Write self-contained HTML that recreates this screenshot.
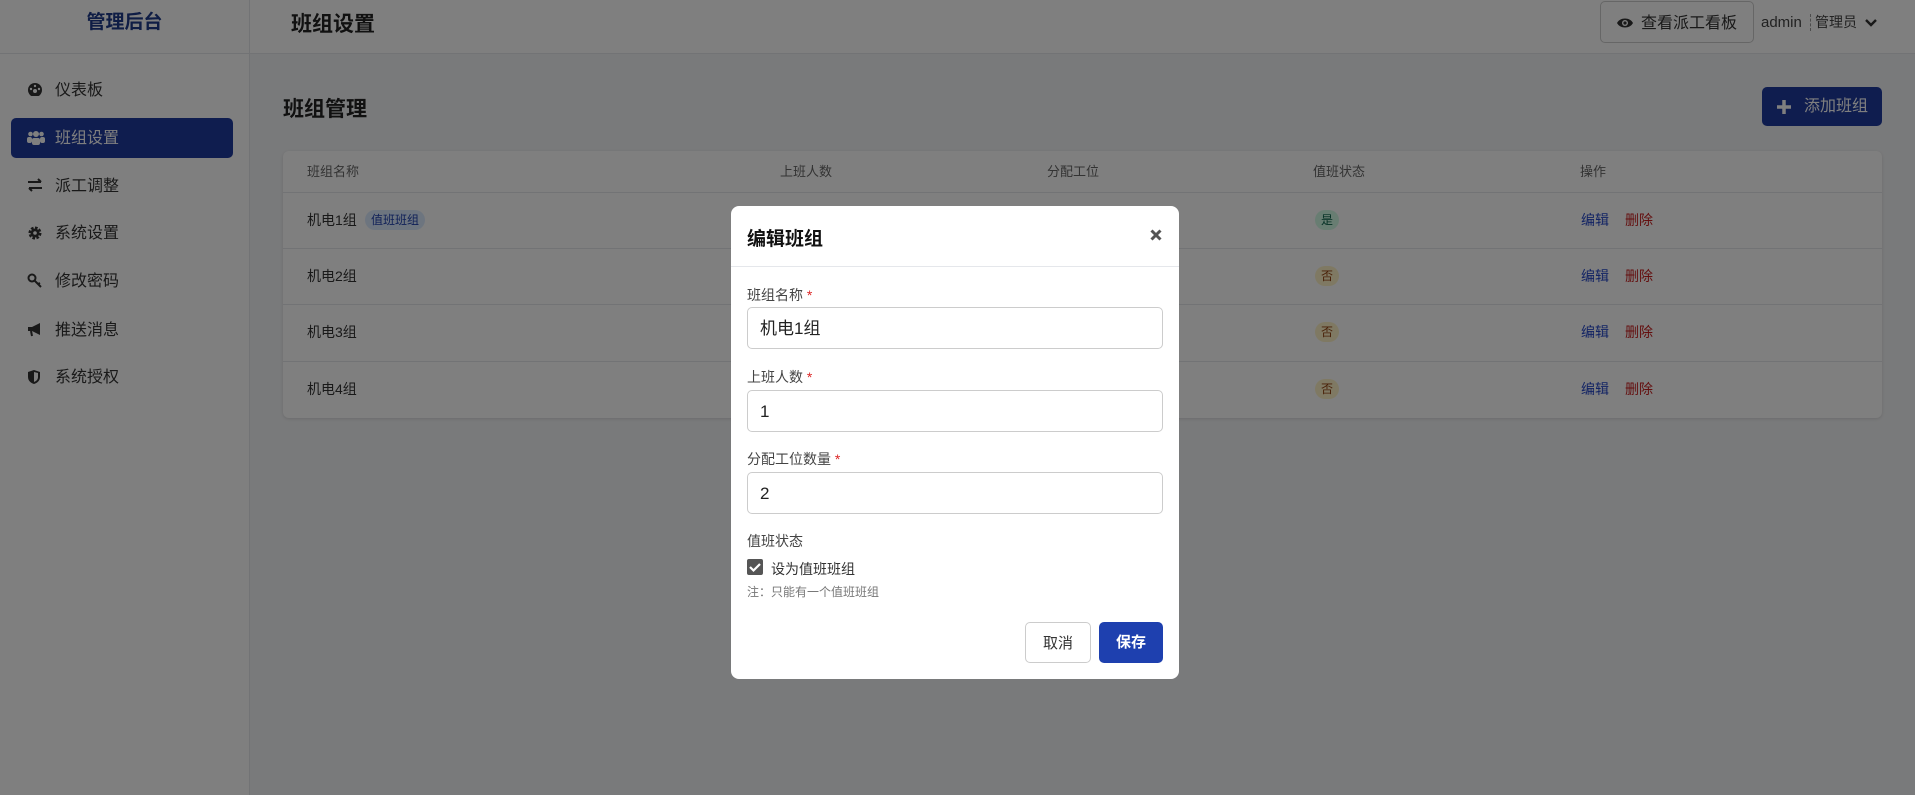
<!DOCTYPE html>
<html><head><meta charset="utf-8">
<style>
*{box-sizing:border-box;margin:0;padding:0}
body{width:1915px;height:795px;overflow:hidden;font-family:"Liberation Sans","Noto Sans CJK SC",sans-serif;background:#f3f4f6;position:relative;color:#333}
.side{position:absolute;left:0;top:0;width:250px;height:795px;background:#fff;border-right:1px solid #e5e7eb}
.logo{height:54px;border-bottom:1px solid #e5e7eb;text-align:center;line-height:46px;font-size:19px;font-weight:bold;color:#1e3a8a}
.nav{position:absolute;left:11px;width:222px;height:40px;line-height:42px;font-size:16px;color:#333;border-radius:5px;padding-left:44px}
.nav svg{position:absolute;left:16px;top:12px}
.nav.on{background:#1e3a9f;color:#fff}
.head{position:absolute;left:250px;top:0;right:0;height:54px;background:#fff;border-bottom:1px solid #e5e7eb}
.title{position:absolute;left:41px;top:8px;font-size:21px;font-weight:bold;color:#222}
.hbtn{position:absolute;left:1350px;top:1px;width:154px;height:42px;border:1px solid #ccc;border-radius:5px;font-size:16px;line-height:44px;padding-left:40px;color:#333}
.hbtn svg{position:absolute;left:16px;top:15px}
.user{position:absolute;left:1511px;top:12px;font-size:15px;color:#444}
.h2{position:absolute;left:283px;top:93px;font-size:21px;font-weight:bold;color:#222}
.add{position:absolute;left:1762px;top:87px;width:120px;height:39px;background:#1e3a9f;border-radius:5px;color:#fff;font-size:16px;line-height:40px;padding-left:42px}
.card{position:absolute;left:283px;top:151px;width:1599px;height:267px;background:#fff;border-radius:6px;box-shadow:0 1px 3px rgba(0,0,0,.12)}
.th{position:absolute;top:0;height:41px;line-height:41px;font-size:13px;color:#666}
.row{position:absolute;left:0;width:1599px;border-top:1px solid #e5e7eb;height:57px}
.row span{position:absolute;top:0;line-height:54px;font-size:14px}
.badge{display:inline-block;line-height:20px!important;height:20px;padding:0 6px;border-radius:10px;font-size:12px!important;top:17px!important}
.ov{position:absolute;left:0;top:0;width:1915px;height:795px;background:rgba(0,0,0,.5)}
.modal{position:absolute;left:731px;top:206px;width:448px;height:473px;background:#fff;border-radius:8px}
.mt{position:absolute;left:16px;top:18px;font-size:19px;font-weight:bold;color:#111}
.close{position:absolute;left:419px;top:22px}
.hr{position:absolute;left:0;top:60px;width:448px;border-top:1px solid #e5e7eb}
.lb{position:absolute;left:16px;font-size:14px;color:#444}
.lb i{color:#dc2626;font-style:normal}
.in{position:absolute;left:16px;width:416px;height:42px;border:1px solid #ccc;border-radius:5px;font-size:17px;line-height:42px;padding-left:12px;color:#222}
.btn{position:absolute;top:416px;height:41px;border-radius:5px;font-size:15px;line-height:41px;text-align:center}
</style></head><body>
<div class="side">
<div class="logo">管理后台</div>
<div class="nav" style="top:70px"><svg width="16" height="14" viewBox="0 0 16 14"><circle cx="8" cy="8" r="7" fill="#333"/><circle cx="8" cy="9" r="2" fill="#fff"/><circle cx="4" cy="7" r="1.2" fill="#fff"/><circle cx="8" cy="4" r="1.2" fill="#fff"/><circle cx="12" cy="7" r="1.2" fill="#fff"/></svg>仪表板</div>
<div class="nav on" style="top:118px"><svg width="18" height="15" viewBox="0 0 18 15"><circle cx="9" cy="4" r="3" fill="#fff"/><circle cx="3.5" cy="4" r="2.3" fill="#fff"/><circle cx="14.5" cy="4" r="2.3" fill="#fff"/><rect x="5" y="8" width="8" height="7" rx="2" fill="#fff"/><rect x="0" y="7" width="5" height="6" rx="2" fill="#fff"/><rect x="13" y="7" width="5" height="6" rx="2" fill="#fff"/></svg>班组设置</div>
<div class="nav" style="top:166px"><svg width="16" height="14" viewBox="0 0 16 14"><path d="M1 4h13M11 1l3 3M15 10H2M5 13l-3-3" stroke="#333" stroke-width="2" fill="none"/></svg>派工调整</div>
<div class="nav" style="top:213px"><svg width="16" height="16" viewBox="0 0 16 16"><circle cx="8" cy="8" r="5" fill="none" stroke="#333" stroke-width="3" stroke-dasharray="2.5 1.4"/><circle cx="8" cy="8" r="4.5" fill="#333"/><circle cx="8" cy="8" r="1.8" fill="#fff"/></svg>系统设置</div>
<div class="nav" style="top:261px"><svg width="16" height="16" viewBox="0 0 16 16"><circle cx="5" cy="5" r="3.5" fill="none" stroke="#333" stroke-width="2"/><path d="M7.5 7.5L14 14M11 11l2-1" stroke="#333" stroke-width="2"/></svg>修改密码</div>
<div class="nav" style="top:310px"><svg width="16" height="15" viewBox="0 0 16 15"><path d="M1 5h4l8-4v12L5 9H1z" fill="#333"/><path d="M4 9l1 5" stroke="#333" stroke-width="2"/></svg>推送消息</div>
<div class="nav" style="top:357px"><svg width="14" height="16" viewBox="0 0 14 16"><path d="M7 1L1 3v5c0 4 3 6 6 7 3-1 6-3 6-7V3z" fill="#333"/><path d="M7 3v10c2-1 4-2 4-5V4z" fill="#fff"/></svg>系统授权</div>
</div>
<div class="head">
<div class="title">班组设置</div>
<div class="hbtn"><svg width="16" height="12" viewBox="0 0 16 12"><path d="M0 6C3 0 13 0 16 6 13 12 3 12 0 6z" fill="#333"/><circle cx="8" cy="6" r="3" fill="#fff"/><circle cx="8" cy="6" r="1.6" fill="#333"/></svg>查看派工看板</div>
<div class="user">admin <span style="border-left:1px dashed #999;margin:0 4px"></span> <span style="font-size:14px">管理员</span> <svg width="12" height="9" viewBox="0 0 12 9" style="margin-left:4px"><path d="M1 2l5 5 5-5" stroke="#333" stroke-width="2.4" fill="none"/></svg></div>
</div>
<div class="h2">班组管理</div>
<div class="add"><svg width="14" height="14" viewBox="0 0 14 14" style="position:absolute;left:15px;top:13px"><path d="M7 0v14M0 7h14" stroke="#fff" stroke-width="3.5"/></svg>添加班组</div>
<div class="card">
<div class="th" style="left:24px">班组名称</div><div class="th" style="left:497px">上班人数</div><div class="th" style="left:764px">分配工位</div><div class="th" style="left:1030px">值班状态</div><div class="th" style="left:1297px">操作</div>
<div class="row" style="top:41px"><span style="left:24px">机电1组</span><span class="badge" style="left:82px;background:#dbeafe;color:#1e40af">值班班组</span><span class="badge" style="left:1032px;background:#d1fae5;color:#065f46">是</span><span style="left:1298px;color:#2547c8">编辑</span><span style="left:1342px;color:#c81e1e">删除</span></div>
<div class="row" style="top:97px"><span style="left:24px">机电2组</span><span class="badge" style="left:1032px;background:#fef3c7;color:#92400e">否</span><span style="left:1298px;color:#2547c8">编辑</span><span style="left:1342px;color:#c81e1e">删除</span></div>
<div class="row" style="top:153px"><span style="left:24px">机电3组</span><span class="badge" style="left:1032px;background:#fef3c7;color:#92400e">否</span><span style="left:1298px;color:#2547c8">编辑</span><span style="left:1342px;color:#c81e1e">删除</span></div>
<div class="row" style="top:210px"><span style="left:24px">机电4组</span><span class="badge" style="left:1032px;background:#fef3c7;color:#92400e">否</span><span style="left:1298px;color:#2547c8">编辑</span><span style="left:1342px;color:#c81e1e">删除</span></div>
</div>
<div class="ov"></div>
<div class="modal">
<div class="mt">编辑班组</div>
<div class="close"><svg width="12" height="12" viewBox="0 0 12 12"><path d="M1.5 1.5l9 9M10.5 1.5l-9 9" stroke="#555" stroke-width="3"/></svg></div>
<div class="hr"></div>
<div class="lb" style="top:79px">班组名称 <i>*</i></div>
<div class="in" style="top:101px">机电1组</div>
<div class="lb" style="top:161px">上班人数 <i>*</i></div>
<div class="in" style="top:184px">1</div>
<div class="lb" style="top:243px">分配工位数量 <i>*</i></div>
<div class="in" style="top:266px">2</div>
<div class="lb" style="top:325px">值班状态</div>
<div style="position:absolute;left:16px;top:353px;width:16px;height:16px;background:#555;border-radius:2px"><svg width="16" height="16" viewBox="0 0 16 16"><path d="M3 8l3.5 3.5L13 5" stroke="#fff" stroke-width="2.2" fill="none"/></svg></div>
<div class="lb" style="top:353px;left:40px;color:#333">设为值班班组</div>
<div class="lb" style="top:377px;font-size:12px;color:#777">注：只能有一个值班班组</div>
<div class="btn" style="left:294px;width:66px;border:1px solid #ccc;color:#333">取消</div>
<div class="btn" style="left:368px;width:64px;background:#1e40af;color:#fff;font-weight:bold">保存</div>
</div>
</body></html>
